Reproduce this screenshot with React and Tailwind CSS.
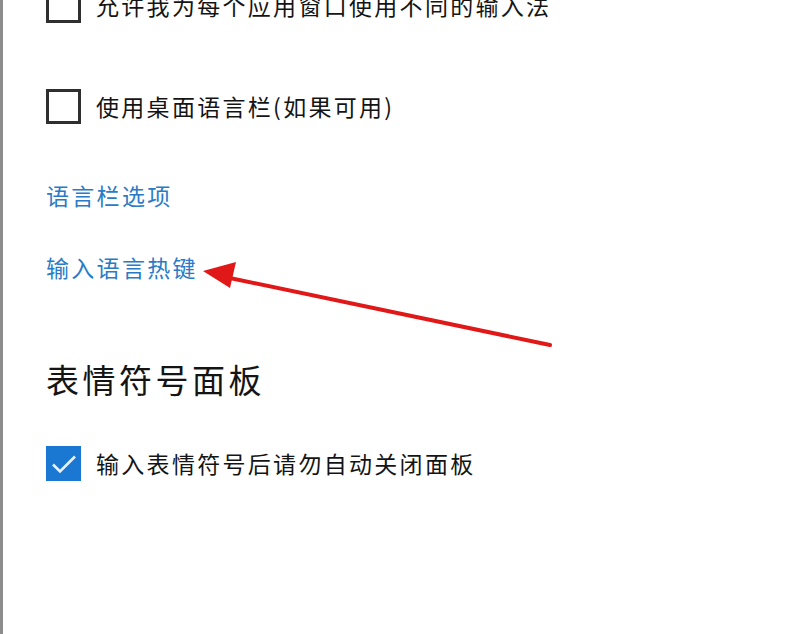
const font = "font-['Microsoft_YaHei','Noto_Sans_CJK_SC',sans-serif]";

function Box({ checked }) {
  if (checked) {
    return (
      <span className="w-[35px] h-[35px] shrink-0 bg-[#1a78d2] flex items-center justify-center">
        <svg width="26" height="20" viewBox="0 0 26 20" fill="none">
          <path d="M2 10.5 L9 17.5 L24 2.5" stroke="#e8f2fc" strokeWidth="2.6" />
        </svg>
      </span>
    );
  }
  return <span className="w-[35px] h-[35px] shrink-0 border-[3px] border-[#2f2f2f] bg-white" />;
}

function Row({ checked, label, className = "" }) {
  return (
    <div className={`flex items-center gap-[15px] h-[35px] ${className}`}>
      <Box checked={checked} />
      <span className="text-[23px] leading-[35px] tracking-[2.3px] text-[#141414]">{label}</span>
    </div>
  );
}

export default function App() {
  return (
    <div className={`relative w-[800px] h-[634px] overflow-hidden bg-white ${font}`}>
      <div className="h-full border-l-[3px] border-[#8c8c8c] pl-[43px] flex flex-col">
        <Row className="-mt-[12px]" label="允许我为每个应用窗口使用不同的输入法" />
        <Row className="mt-[66px]" label="使用桌面语言栏(如果可用)" />

        <a className="mt-[56px] h-[30px] leading-[30px] text-[23px] tracking-[2.3px] text-[#2a7bc6] w-fit">
          语言栏选项
        </a>
        <a className="mt-[42px] h-[30px] leading-[30px] text-[23px] tracking-[2.3px] text-[#2a7bc6] w-fit">
          输入语言热键
        </a>

        <h2 className="mt-[75px] h-[44px] leading-[44px] text-[33px] tracking-[3.5px] text-[#141414]">
          表情符号面板
        </h2>

        <Row checked className="mt-[45px]" label="输入表情符号后请勿自动关闭面板" />
      </div>

      {/* red annotation arrow */}
      <svg className="absolute left-0 top-0 pointer-events-none" width="800" height="634">
        <line x1="550" y1="345" x2="225" y2="277" stroke="#e01818" strokeWidth="4" strokeLinecap="round" />
        <polygon points="203,271 236,262 230,288" fill="#e01818" />
      </svg>
    </div>
  );
}
